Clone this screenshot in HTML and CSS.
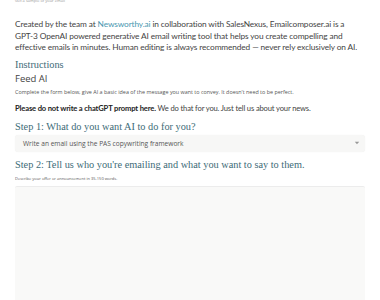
FILE: index.html
```html
<!DOCTYPE html>
<html>
<head>
<meta charset="utf-8">
<link rel="stylesheet" href="styles.css">
</head>
<body>
<div class="page">
  <div class="topnote">Get a sample of your email</div>
  <p class="intro">Created by the team at <a class="link" href="#">Newsworthy.ai</a> in collaboration with SalesNexus, Emailcomposer.ai is a <span class="nowrap">GPT-3</span> OpenAI powered generative AI email writing tool that helps you create compelling and effective emails in minutes. Human editing is always recommended — never rely exclusively on AI.</p>
  <h2 class="h first">Instructions</h2>
  <div class="feed">Feed AI</div>
  <div class="tiny">Complete the form below, give AI a basic idea of the message you want to convey. It doesn't need to be perfect.</div>
  <p class="note"><strong>Please do not write a chatGPT prompt here.</strong> We do that for you. Just tell us about your news.</p>
  <h2 class="h step">Step 1: What do you want AI to do for you?</h2>
  <div class="select">
    <span>Write an email using the PAS copywriting framework</span>
    <svg class="caret" width="6" height="4" viewBox="0 0 6 4"><path d="M0.8 0.8 L3 3.2 L5.2 0.8 Z" fill="#999"/></svg>
  </div>
  <h2 class="h step2">Step 2: Tell us who you're emailing and what you want to say to them.</h2>
  <div class="tiny small2">Describe your offer or announcement in 35-150 words.</div>
  <div class="textarea"></div>
</div>
</body>
</html>
```
FILE: styles.css
```css
html, body { margin: 0; padding: 0; background: #fff; }
body { font-family: "Open Sans", sans-serif; color: #444; overflow: hidden; height: 300px; }
.page { padding: 0 15px; }
.topnote { font-size: 4px; line-height: 5px; color: #999; margin-top: -2px; }
.intro { font-family: "Lato", sans-serif; font-size: 8.3px; letter-spacing: -0.12px; line-height: 11.5px; margin: 16px 0 0; color: #444; }
.nowrap { white-space: nowrap; }
.link { color: #4a98b0; text-decoration: none; }
.h { font-family: "Liberation Serif", serif; font-weight: normal; color: #3d6b77; margin: 0; font-size: 10.3px; line-height: 14px; }
.first { margin-top: 4px; }
.feed { font-size: 9.5px; line-height: 12px; margin-top: 1px; color: #444; }
.tiny { font-size: 5.4px; line-height: 7px; color: #555; margin-top: 4px; }
.note { font-family: "Lato", sans-serif; font-size: 7.6px; letter-spacing: -0.15px; line-height: 12px; margin: 6px 0 0; color: #444; }
.note strong { color: #222; }
.step { margin-top: 6.5px; }
.select { margin-top: 0.5px; height: 17px; background: #f7f7f6; border-radius: 3px; display: flex; align-items: center; justify-content: space-between; padding: 0 5px 0 8px; font-size: 6.6px; color: #555; box-shadow: 0 0 1px rgba(0,0,0,0.08); }
.step2 { margin-top: 6.5px; }
.small2 { font-size: 4px; line-height: 6px; margin-top: 4px; }
.textarea { margin-top: 4px; height: 140px; background: #f9f9f8; border-top: 1px solid #ececec; border-radius: 2px; }
```
